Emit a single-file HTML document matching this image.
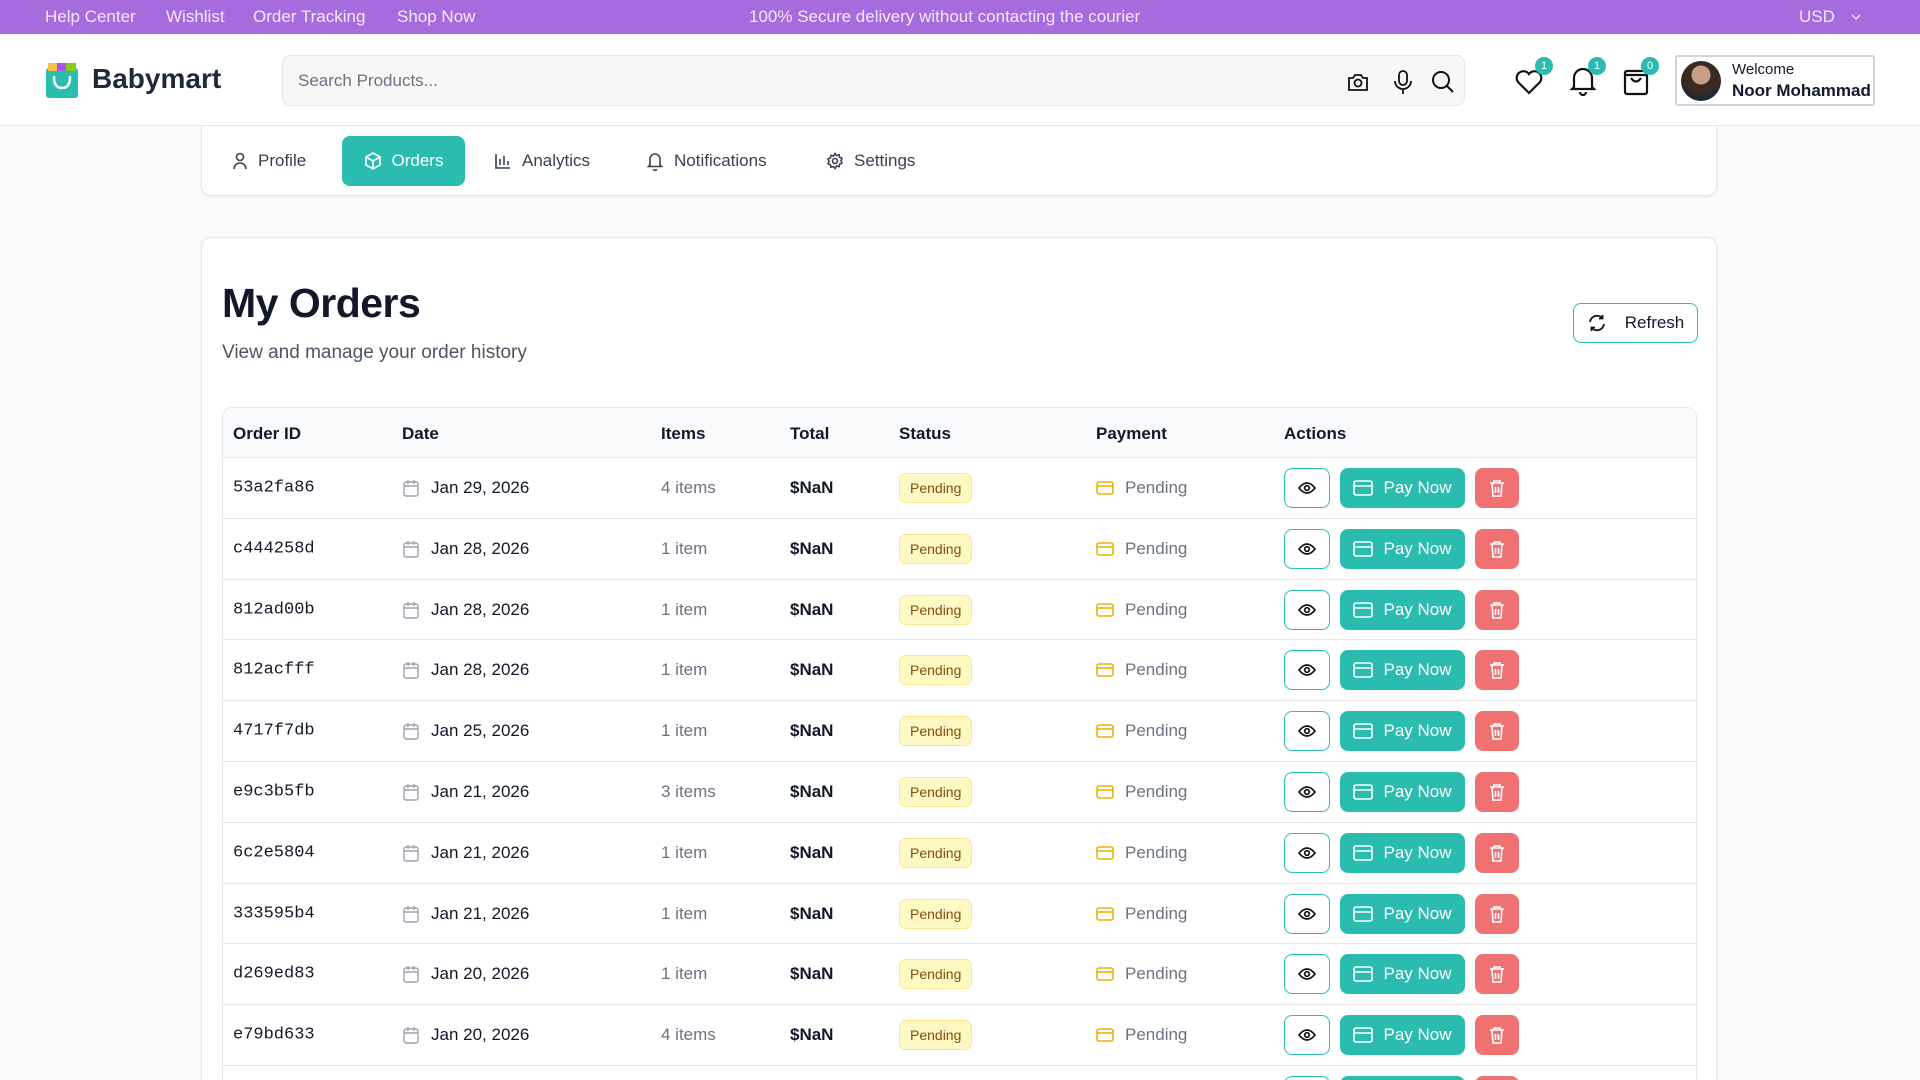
<!DOCTYPE html>
<html style="width:1920px;height:1080px;overflow:hidden"><head><meta charset="utf-8"><style>
*{box-sizing:border-box;margin:0;padding:0}
body{width:1920px;height:1080px;overflow:hidden;background:#f8fafc;font-family:"Liberation Sans",sans-serif;color:#111827;position:relative}
.abs{position:absolute}
.top{left:0;top:0;width:1920px;height:34px;background:#a66bdc;color:#f3e8ff;font-size:17px}
.top span{position:absolute;top:7px}
.hdr{left:0;top:34px;width:1920px;height:92px;background:#fff;border-bottom:1px solid #e5e7eb}
.search{left:282px;top:55px;width:1183px;height:51px;background:#f7f7f8;border:1px solid #e5e7eb;border-radius:8px}
.badge{width:18px;height:18px;border-radius:9px;background:#2bbcb0;color:#fff;font-size:11px;text-align:center;line-height:18px}
.card{background:#fff;border:1px solid #e5e7eb;border-radius:10px;box-shadow:0 1px 3px rgba(0,0,0,.06)}
.tab{position:absolute;top:10px;height:50px;display:flex;align-items:center;gap:10px;font-size:17px;color:#374151}
.row{position:absolute;left:222px;width:1475px;height:61px;border-top:1px solid #e5e7eb;border-left:1px solid #e5e7eb;border-right:1px solid #e5e7eb;font-size:17px;background:#fff}
.row>*{position:absolute;top:50%;transform:translateY(-50%)}
.pill{background:#fef9c3;color:#854d0e;font-size:14px;padding:6px 10px;border-radius:7px;border:1px solid #fde68a}
.eye{width:46px;height:40px;border:1.5px solid #2bbcb0;border-radius:8px;background:#fff;display:flex;align-items:center;justify-content:center}
.pay{width:125px;height:40px;background:#2bbcb0;border-radius:8px;color:#fff;display:flex;align-items:center;justify-content:center;gap:10px;font-size:17px}
.del{width:44px;height:40px;background:#f07171;border-radius:8px;display:flex;align-items:center;justify-content:center}
</style></head><body>
<div class="abs top"><span style="left:45px">Help Center</span><span style="left:166px">Wishlist</span><span style="left:253px">Order Tracking</span><span style="left:397px">Shop Now</span><span style="left:749px">100% Secure delivery without contacting the courier</span><span style="left:1799px">USD</span><svg class="abs" style="left:1850px;top:11px" width="12" height="12" viewBox="0 0 12 12"><path d="M2 4l4 4 4-4" stroke="#f3e8ff" fill="none" stroke-width="1.3"/></svg></div>
<div class="abs hdr"></div>
<svg class="abs" style="left:46px;top:62px" width="32" height="36" viewBox="0 0 32 36"><rect x="0" y="6" width="32" height="30" rx="3" fill="#2bbcb0"/><rect x="2" y="1" width="9" height="8" fill="#f5c542"/><rect x="11" y="1" width="9" height="8" fill="#a855f7"/><rect x="20" y="1" width="10" height="8" fill="#84cc16"/><path d="M8 15q0 11 8 11t8-11" stroke="#fff" stroke-width="2.5" fill="none" stroke-linecap="round"/></svg>
<div class="abs" style="left:92px;top:63px;font-size:28px;font-weight:bold;color:#1f2937">Babymart</div>
<div class="abs search"><span class="abs" style="left:15px;top:15px;font-size:17px;color:#6b7280">Search Products...</span>
<svg class="abs" style="left:1063px;top:14px" width="24" height="24" viewBox="0 0 24 24" fill="none" stroke="#111" stroke-width="1.8"><path d="M3 8h4l2-3h6l2 3h4v12H3z"/><circle cx="12" cy="13" r="3.5"/></svg>
<svg class="abs" style="left:1108px;top:13px" width="24" height="26" viewBox="0 0 24 26" fill="none" stroke="#111" stroke-width="1.8"><rect x="8" y="2" width="8" height="14" rx="4"/><path d="M4 12a8 8 0 0 0 16 0M12 20v5"/></svg>
<svg class="abs" style="left:1147px;top:13px" width="26" height="26" viewBox="0 0 26 26" fill="none" stroke="#111" stroke-width="2"><circle cx="11" cy="11" r="8"/><path d="M17 17l6 6"/></svg></div>
<svg class="abs" style="left:1514px;top:67px" width="30" height="28" viewBox="0 0 30 28" fill="none" stroke="#111" stroke-width="2.2"><path d="M15 26L4 15a6.5 6.5 0 0 1 11-8 6.5 6.5 0 0 1 11 8z"/></svg>
<div class="abs badge" style="left:1535px;top:57px">1</div>
<svg class="abs" style="left:1568px;top:64px" width="30" height="32" viewBox="0 0 30 32" fill="none" stroke="#111" stroke-width="2.2"><path d="M6 23V14a9 9 0 0 1 18 0v9l2 2H4zM12 28a3 3 0 0 0 6 0"/></svg>
<div class="abs badge" style="left:1588px;top:57px">1</div>
<svg class="abs" style="left:1622px;top:66px" width="28" height="30" viewBox="0 0 28 30" fill="none" stroke="#111" stroke-width="2.2"><rect x="3" y="5" width="22" height="23" rx="2"/><path d="M9 12q5 7 10 0M3 9h22"/></svg>
<div class="abs badge" style="left:1641px;top:57px">0</div>
<div class="abs" style="left:1675px;top:55px;width:200px;height:51px;border:2px solid #d1d5db;border-radius:3px;background:#fff;overflow:hidden">
<div class="abs" style="left:4px;top:4px;width:40px;height:40px;border-radius:20px;background:radial-gradient(circle at 50% 35%,#c9a087 0 28%,#3b2a24 30% 60%,#1f2937 62%)"></div>
<div class="abs" style="left:55px;top:4px;font-size:15px">Welcome</div>
<div class="abs" style="left:55px;top:24px;font-size:17px;font-weight:bold;white-space:nowrap">Noor Mohammad</div></div>

<div class="abs card" style="left:201px;top:126px;width:1516px;height:70px;border-top:none;border-radius:0 0 10px 10px">
<div class="tab" style="left:30px"><svg width="16" height="18" viewBox="0 0 16 18" fill="none" stroke="#374151" stroke-width="1.6"><circle cx="8" cy="5" r="3.5"/><path d="M2 17a6 6 0 0 1 12 0"/></svg>Profile</div>
<div class="tab" style="left:140px;width:123px;background:#2bbcb0;color:#fff;border-radius:8px;justify-content:center"><svg width="18" height="18" viewBox="0 0 18 18" fill="none" stroke="#fff" stroke-width="1.6"><path d="M9 1l7 4v8l-7 4-7-4V5zM2 5l7 4 7-4M9 9v8"/></svg>Orders</div>
<div class="tab" style="left:292px"><svg width="18" height="18" viewBox="0 0 18 18" fill="none" stroke="#374151" stroke-width="1.6"><path d="M2 2v14h14M6 13V7M10 13V4M14 13V9"/></svg>Analytics</div>
<div class="tab" style="left:444px"><svg width="18" height="20" viewBox="0 0 18 20" fill="none" stroke="#374151" stroke-width="1.6"><path d="M4 14V8a5 5 0 0 1 10 0v6l1.5 1.5h-13zM7.5 18a1.5 1.5 0 0 0 3 0"/></svg>Notifications</div>
<div class="tab" style="left:624px"><svg width="18" height="18" viewBox="0 0 18 18" fill="none" stroke="#374151" stroke-width="1.6"><circle cx="9" cy="9" r="2.5"/><path d="M9 1.5l1.6 2 2.5-.7.5 2.5 2.4 1-1 2.4 1 2.4-2.4 1-.5 2.5-2.5-.7L9 16.5l-1.6-2-2.5.7-.5-2.5-2.4-1 1-2.4-1-2.4 2.4-1 .5-2.5 2.5.7z"/></svg>Settings</div>
</div>

<div class="abs card" style="left:201px;top:237px;width:1516px;height:843px;border-bottom:none;border-radius:10px 10px 0 0">
<div class="abs" style="left:20px;top:42px;font-size:41px;font-weight:bold;letter-spacing:-.5px;color:#111827">My Orders</div>
<div class="abs" style="left:20px;top:104px;font-size:19px;color:#4b5563">View and manage your order history</div>
<div class="abs" style="left:1371px;top:65px;width:125px;height:40px;border:1.5px solid #2bbcb0;border-radius:8px;display:flex;align-items:center;justify-content:center;gap:18px;font-size:17px"><svg width="20" height="20" viewBox="0 0 20 20" fill="none" stroke="#111" stroke-width="1.8"><path d="M3 9a7 7 0 0 1 12.5-3.5M17 11a7 7 0 0 1-12.5 3.5M15.5 2v3.5H12M4.5 18v-3.5H8"/></svg>Refresh</div>
</div>
<div class="abs" style="left:222px;top:407px;width:1475px;height:673px;border:1px solid #e5e7eb;border-bottom:none;border-radius:10px 10px 0 0;background:#fff;overflow:hidden">
<div style="height:50px;background:#f9fafb;position:relative;font-size:17px;font-weight:bold">
<span class="abs" style="left:10px;top:16px">Order ID</span><span class="abs" style="left:179px;top:16px">Date</span><span class="abs" style="left:438px;top:16px">Items</span><span class="abs" style="left:567px;top:16px">Total</span><span class="abs" style="left:676px;top:16px">Status</span><span class="abs" style="left:873px;top:16px">Payment</span><span class="abs" style="left:1061px;top:16px">Actions</span></div>
</div>
<div id="rows" class="abs" style="left:0;top:0;width:1920px;height:1080px;overflow:hidden"></div>
<script>
var d=[["53a2fa86","Jan 29, 2026","4 items"],["c444258d","Jan 28, 2026","1 item"],["812ad00b","Jan 28, 2026","1 item"],["812acfff","Jan 28, 2026","1 item"],["4717f7db","Jan 25, 2026","1 item"],["e9c3b5fb","Jan 21, 2026","3 items"],["6c2e5804","Jan 21, 2026","1 item"],["333595b4","Jan 21, 2026","1 item"],["d269ed83","Jan 20, 2026","1 item"],["e79bd633","Jan 20, 2026","4 items"],["a1b2c3d4","Jan 19, 2026","1 item"]];
var h="";
d.forEach(function(r,i){var t=457+i*60.8;
h+='<div class="row" style="top:'+t+'px"><span style="left:10px;font-family:\'Liberation Mono\',monospace;font-size:17px">'+r[0]+'</span>'+
'<svg style="left:180px" width="16" height="18" viewBox="0 0 16 18" fill="none" stroke="#9ca3af" stroke-width="1.4"><rect x="1" y="3" width="14" height="14" rx="2"/><path d="M1 7h14M5 1v4M11 1v4"/></svg>'+
'<span style="left:208px">'+r[1]+'</span><span style="left:438px;color:#6b7280">'+r[2]+'</span><span style="left:567px;font-weight:bold">$NaN</span>'+
'<span class="pill" style="left:676px">Pending</span>'+
'<svg style="left:873px" width="18" height="14" viewBox="0 0 18 14" fill="none" stroke="#eab308" stroke-width="1.6"><rect x="1" y="1" width="16" height="12" rx="2"/><path d="M1 5h16"/></svg><span style="left:902px;color:#6b7280">Pending</span>'+
'<div class="eye" style="left:1061px"><svg width="18" height="14" viewBox="0 0 18 14" fill="none" stroke="#111" stroke-width="1.7"><path d="M1 7q8-10 16 0q-8 10-16 0z"/><circle cx="9" cy="7" r="2.3"/></svg></div>'+
'<div class="pay" style="left:1117px"><svg width="20" height="16" viewBox="0 0 20 16" fill="none" stroke="#fff" stroke-width="1.6"><rect x="1" y="1" width="18" height="14" rx="2"/><path d="M1 6h18"/></svg>Pay Now</div>'+
'<div class="del" style="left:1252px"><svg width="16" height="18" viewBox="0 0 16 18" fill="none" stroke="#fff" stroke-width="1.6"><path d="M1 4h14M5 4V2h6v2M3 4l1 13h8l1-13M6.5 8v6M9.5 8v6"/></svg></div></div>';});
document.getElementById("rows").innerHTML=h;
</script>
</body></html>
